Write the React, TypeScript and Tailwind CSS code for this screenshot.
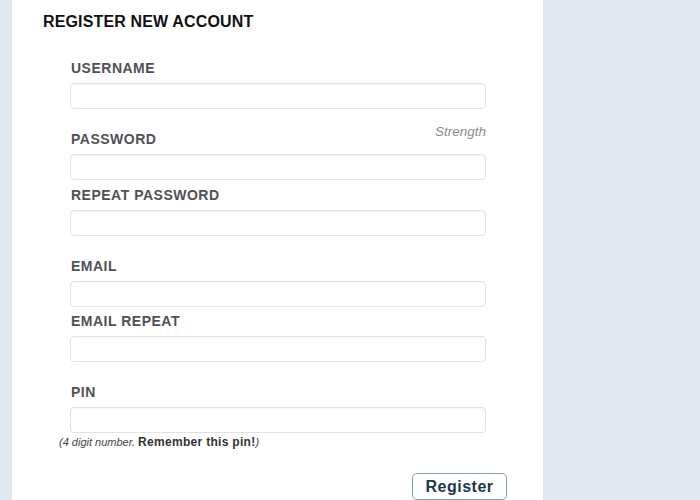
import React from "react";

const font = { fontFamily: '"Liberation Sans", Arial, sans-serif' };

function Label({ children, strength }: { children: React.ReactNode; strength?: boolean }) {
  return (
    <div className="flex justify-between items-end h-[16px] w-[416px]">
      <span className="pl-px text-[14px] leading-[16px] font-bold tracking-[0.5px] text-[#515154]">{children}</span>
      {strength && (
        <span className="relative -top-[7px] text-[13.5px] leading-[16px] italic text-[#8a8a8a]">Strength</span>
      )}
    </div>
  );
}

function Input() {
  return (
    <div className="mt-[7px] h-[26px] w-[416px] rounded-[4px] border border-[#e2e2e2] bg-white shadow-[inset_0_1px_1px_rgba(0,0,0,0.03)]" />
  );
}

export default function App() {
  return (
    <div className="w-[700px] h-[500px] bg-[#e3e9f2] flex overflow-hidden" style={font}>
      <div className="w-[12px] shrink-0" />
      <div className="w-[531px] shrink-0 bg-white h-full shadow-[0_0_3px_rgba(0,0,0,0.06)]">
        <div className="pl-[31px] pt-[13px] text-[16px] leading-[18px] font-bold tracking-[0.15px] text-[#111]">
          REGISTER NEW ACCOUNT
        </div>
        <div className="pl-[58px]">
          <div className="mt-[29px]">
            <Label>USERNAME</Label>
            <Input />
          </div>
          <div className="mt-[22px]">
            <Label strength>PASSWORD</Label>
            <Input />
          </div>
          <div className="mt-[7px]">
            <Label>REPEAT PASSWORD</Label>
            <Input />
          </div>
          <div className="mt-[22px]">
            <Label>EMAIL</Label>
            <Input />
          </div>
          <div className="mt-[6px]">
            <Label>EMAIL REPEAT</Label>
            <Input />
          </div>
          <div className="mt-[22px]">
            <Label>PIN</Label>
            <Input />
          </div>
          <div className="mt-[1px] -ml-[11px] leading-[14px] text-[#444]">
            <span className="italic text-[11px]">(4 digit number. </span>
            <span className="font-bold text-[12px] tracking-[0.3px] text-[#333]">Remember this pin!</span>
            <span className="italic text-[11px]">)</span>
          </div>
          <div className="mt-[24px] flex pl-[342px]">
            <button className="h-[27px] w-[95px] rounded-[5px] border border-[#7f9cb0] bg-white text-[16px] font-bold tracking-[0.5px] text-[#17394a] leading-[18px]">
              Register
            </button>
          </div>
        </div>
      </div>
    </div>
  );
}
